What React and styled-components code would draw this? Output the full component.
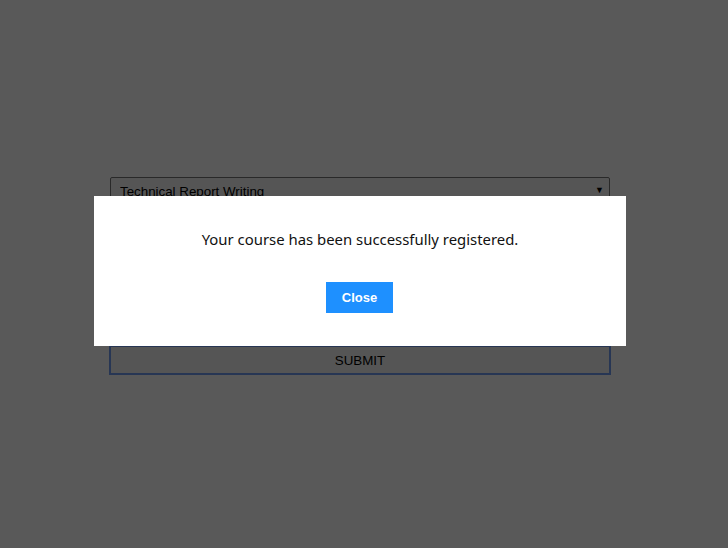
import React from "react";
import styled, { createGlobalStyle } from "styled-components";

const Global = createGlobalStyle`
  html, body {
    margin: 0;
    padding: 0;
    background: #fff;
    font-family: "Liberation Sans", Arial, sans-serif;
  }
`;

const Page = styled.div`
  width: 728px;
  height: 548px;
  padding: 177px 0 0 110px;
  box-sizing: border-box;
`;

const Form = styled.form`
  width: 500px;
  display: flex;
  flex-direction: column;
  gap: 12px;
`;

const SelectWrap = styled.div`
  position: relative;
  width: 500px;
  &::after {
    content: "▼";
    position: absolute;
    right: 6px;
    top: 8px;
    font-size: 9px;
    color: #000;
    pointer-events: none;
  }
`;

const Select = styled.select`
  height: 30px;
  width: 500px;
  box-sizing: border-box;
  border: 1px solid #767676;
  border-radius: 2px;
  background: #f4f4f4;
  padding: 0 9px 1px;
  font-family: "Liberation Sans", Arial, sans-serif;
  font-size: 13.33px;
  color: #000;
  appearance: none;
`;

const Field = styled.input`
  height: 30px;
  box-sizing: border-box;
  border: 1px solid #767676;
  padding: 0 8px;
  font-size: 13.33px;
`;

const Submit = styled.button`
  height: 30px;
  width: 502px;
  margin-left: -1px;
  box-sizing: border-box;
  border: 2px solid #6f9cf0;
  background: #f2f2f2;
  color: #000;
  font-family: "Liberation Sans", Arial, sans-serif;
  font-size: 13.33px;
`;

const Overlay = styled.div`
  position: fixed;
  inset: 0;
  background: rgba(0, 0, 0, 0.65);
  padding: 196px 0 0 94px;
  box-sizing: border-box;
`;

const Modal = styled.div`
  width: 532px;
  height: 150px;
  background: #fff;
  display: flex;
  flex-direction: column;
  align-items: center;
  padding-top: 33px;
  box-sizing: border-box;
`;

const Message = styled.p`
  margin: 0;
  font-family: "Noto Sans", "Open Sans", sans-serif;
  font-size: 14.9px;
  line-height: 20px;
  color: #111;
`;

const CloseButton = styled.button`
  margin-top: 33px;
  margin-right: 1px;
  width: 67px;
  height: 31px;
  border: none;
  background: #1e90ff;
  color: #fff;
  font-family: "Liberation Sans", Arial, sans-serif;
  font-size: 13px;
  font-weight: bold;
`;

export default function App() {
  return (
    <>
      <Global />
      <Page>
        <Form onSubmit={(e) => e.preventDefault()}>
          <SelectWrap>
            <Select defaultValue="trw">
              <option value="trw">Technical Report Writing</option>
            </Select>
          </SelectWrap>
          <Field placeholder="Name" />
          <Field placeholder="Email" />
          <Field placeholder="Phone" />
          <Submit type="submit">SUBMIT</Submit>
        </Form>
      </Page>
      <Overlay>
        <Modal>
          <Message>Your course has been successfully registered.</Message>
          <CloseButton>Close</CloseButton>
        </Modal>
      </Overlay>
    </>
  );
}
